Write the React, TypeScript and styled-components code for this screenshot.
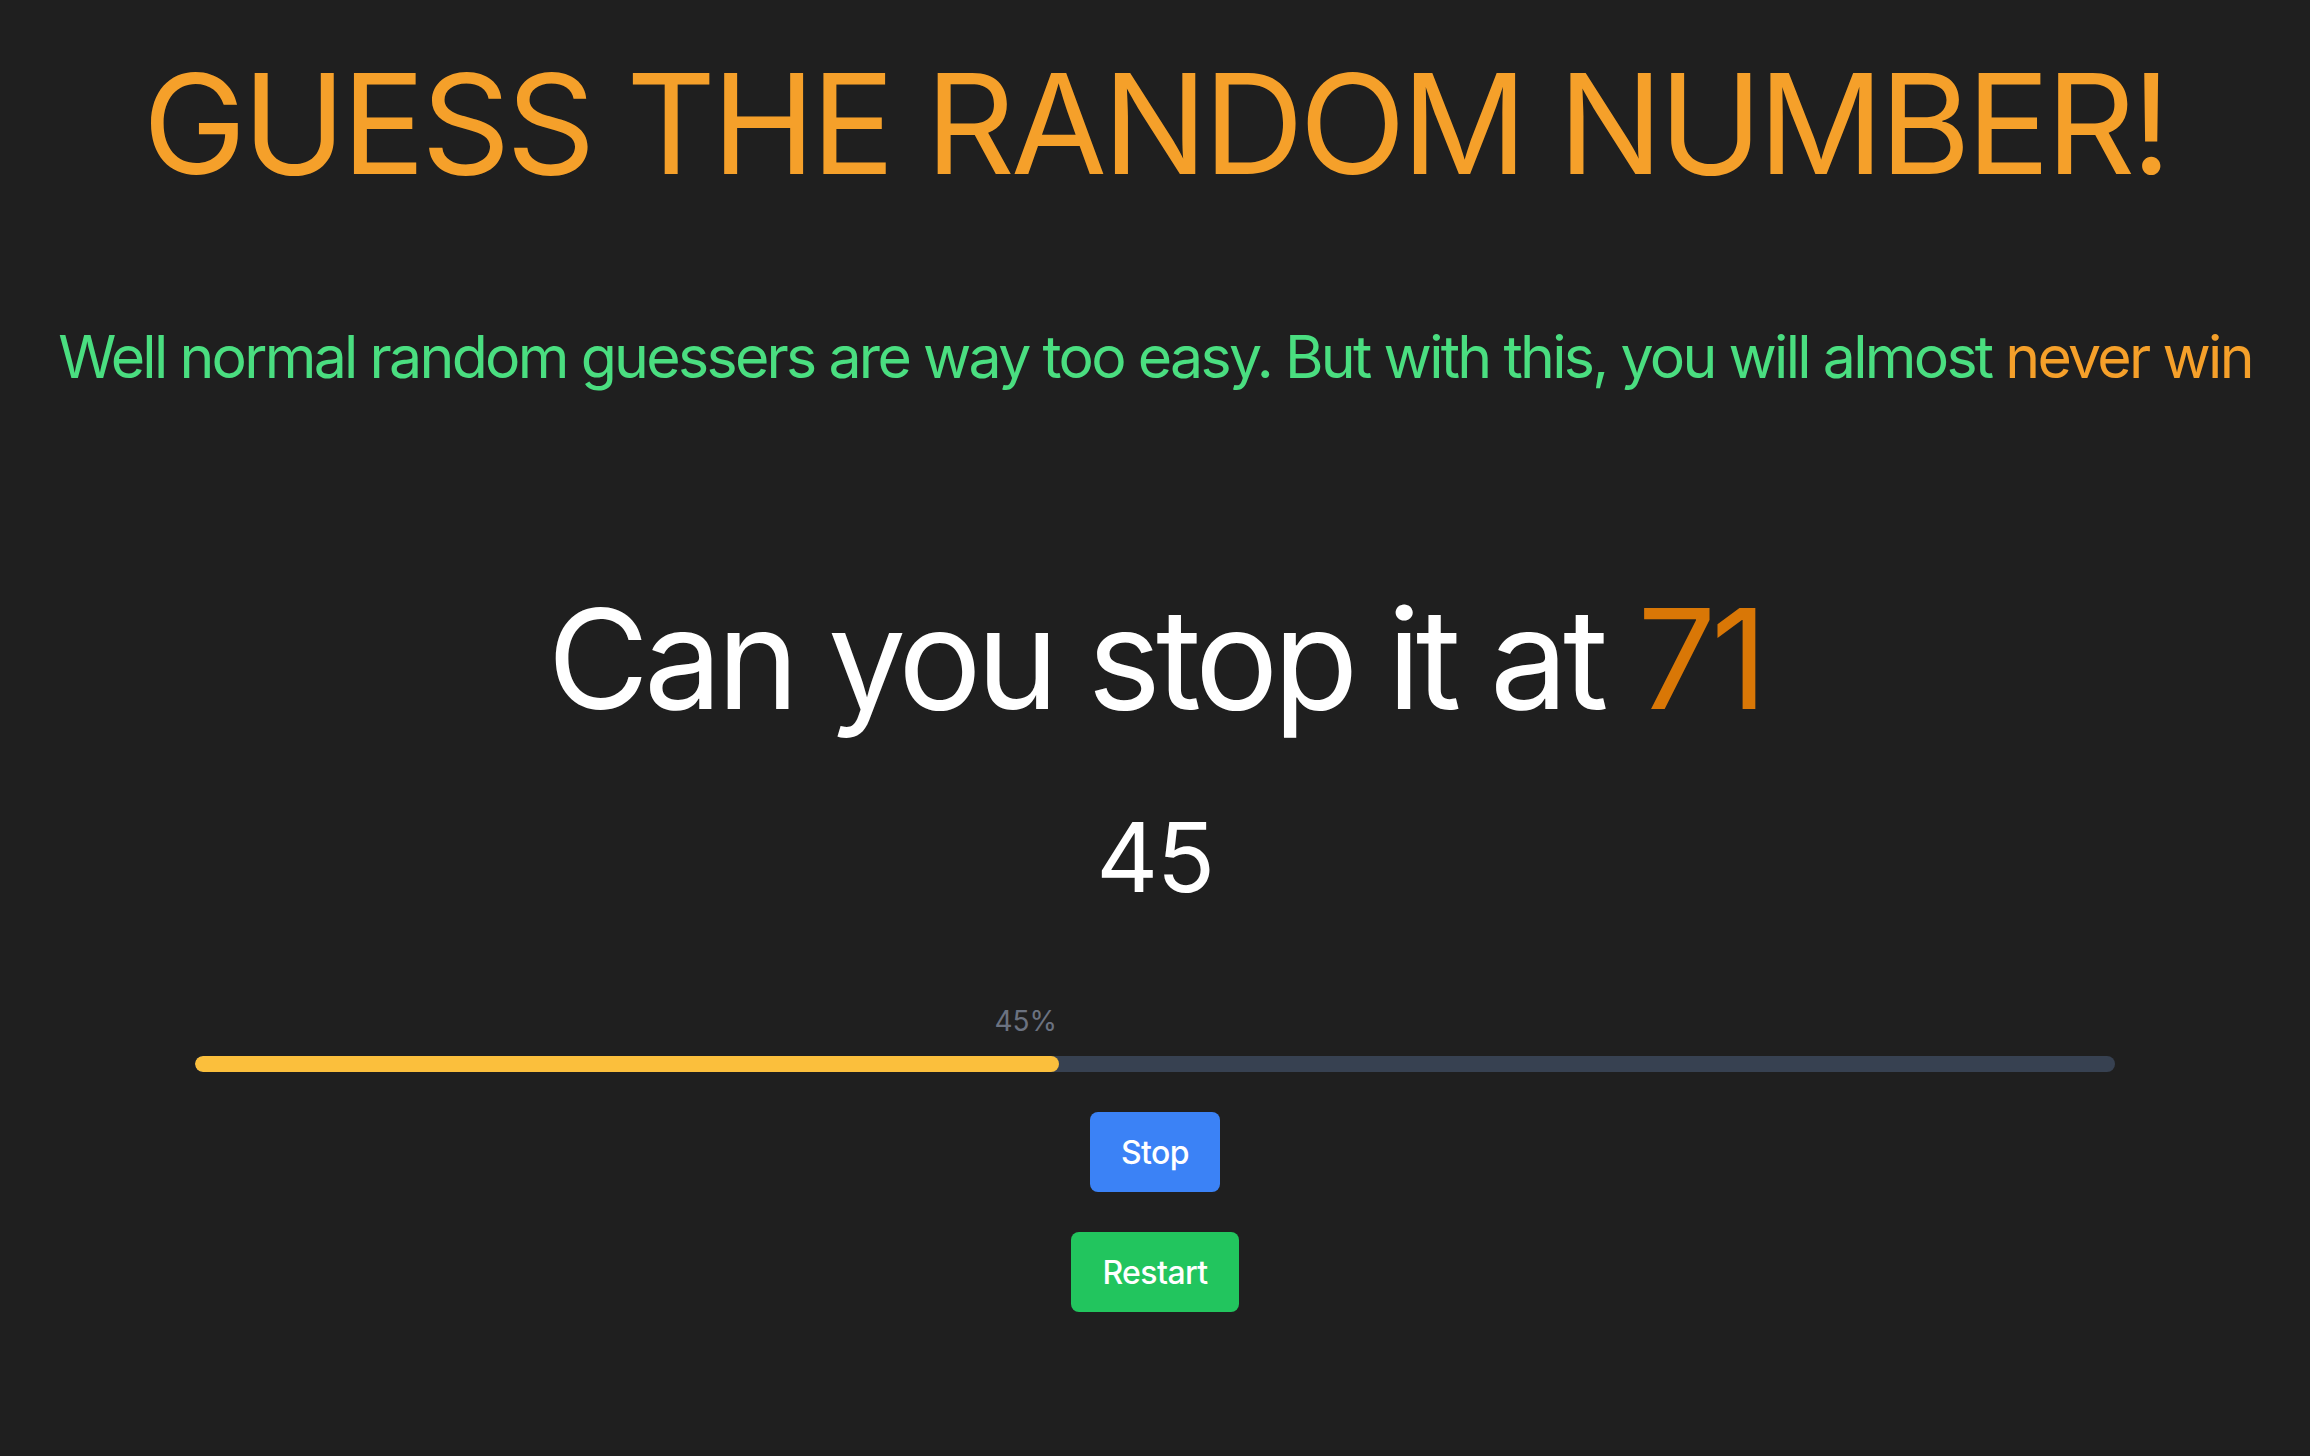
import React from "react";
import styled, { createGlobalStyle } from "styled-components";

const GlobalStyle = createGlobalStyle`
  html, body {
    margin: 0;
    padding: 0;
    background: #1f1f1f;
  }
  body {
    font-family: Inter, "Noto Sans", sans-serif;
    -webkit-font-smoothing: antialiased;
  }
`;

const Page = styled.main`
  min-height: 1456px;
  box-sizing: border-box;
  display: flex;
  flex-direction: column;
  align-items: center;
  padding-top: 54px;
`;

const Title = styled.h1`
  margin: 0;
  font-size: 139px;
  line-height: 1;
  font-weight: 400;
  color: #f5a02a;
  white-space: nowrap;
  letter-spacing: -4.1px;
`;

const Subtitle = styled.p`
  margin: 134px 0 0;
  font-size: 59px;
  line-height: 1;
  font-weight: 400;
  color: #4ade80;
  white-space: nowrap;
  letter-spacing: -2.7px;
`;

const Accent = styled.span<{ $tone: "warm" | "deep" }>`
  color: ${(p) => (p.$tone === "warm" ? "#f5a02a" : "#d97706")};
`;

const Challenge = styled.h2`
  margin: 203px 0 0;
  font-size: 139px;
  line-height: 1;
  font-weight: 400;
  color: #ffffff;
  white-space: nowrap;
  letter-spacing: -5.1px;
`;

const Counter = styled.div`
  margin-top: 81px;
  font-size: 96px;
  line-height: 1;
  font-weight: 400;
  color: #ffffff;
  letter-spacing: -1.5px;
`;

const ProgressBlock = styled.div`
  margin-top: 102px;
  width: 1920px;
  display: flex;
  flex-direction: column;
  gap: 21px;
`;

const ProgressLabel = styled.div`
  text-align: right;
  font-size: 28px;
  line-height: 1;
  color: #6b7280;
  white-space: nowrap;
  padding-right: 2px;
  box-sizing: border-box;
`;

const Track = styled.div`
  height: 16px;
  border-radius: 8px;
  background: #374151;
  overflow: hidden;
`;

const Fill = styled.div`
  height: 100%;
  border-radius: 8px;
  background: #fbbf3c;
`;

const Button = styled.button<{ $variant: "blue" | "green" }>`
  margin-top: 40px;
  height: 80px;
  padding: 0 31px;
  border: none;
  border-radius: 8px;
  font-family: Inter, "Noto Sans", sans-serif;
  font-size: 32px;
  font-weight: 500;
  letter-spacing: -0.6px;
  color: #ffffff;
  cursor: pointer;
  background: ${(p) => (p.$variant === "blue" ? "#3b82f6" : "#22c55e")};
`;

export default function App() {
  const value = 45;
  return (
    <>
      <GlobalStyle />
      <Page>
        <Title>GUESS THE RANDOM NUMBER!</Title>
        <Subtitle>
          Well normal random guessers are way too easy. But with this, you will almost{" "}
          <Accent $tone="warm">never win</Accent>
        </Subtitle>
        <Challenge>
          Can you stop it at <Accent $tone="deep">71</Accent>
        </Challenge>
        <Counter>{value}</Counter>
        <ProgressBlock>
          <ProgressLabel style={{ width: `${value}%` }}>{value}%</ProgressLabel>
          <Track>
            <Fill style={{ width: `${value}%` }} />
          </Track>
        </ProgressBlock>
        <Button $variant="blue">Stop</Button>
        <Button $variant="green">Restart</Button>
      </Page>
    </>
  );
}
